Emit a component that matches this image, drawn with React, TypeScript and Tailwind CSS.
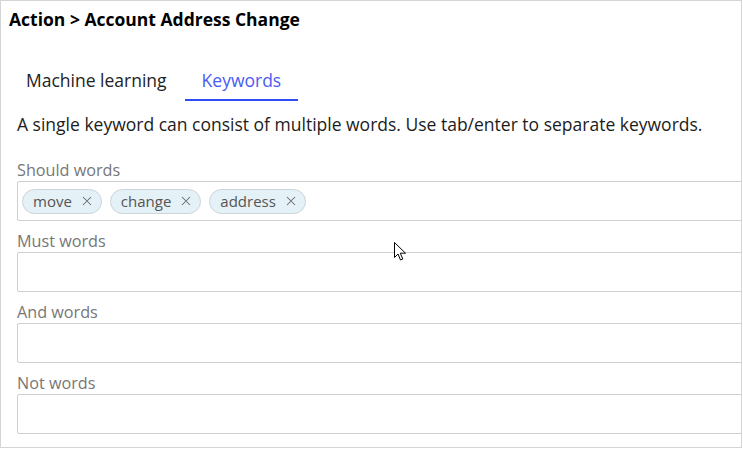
const fields = [
  { label: "Should words", chips: ["move", "change", "address"] },
  { label: "Must words", chips: [] },
  { label: "And words", chips: [] },
  { label: "Not words", chips: [] },
];

function Cursor() {
  return (
    <svg
      className="absolute left-[393px] top-[241px]"
      width="13"
      height="20"
      viewBox="0 0 13 20"
      aria-hidden="true"
    >
      <path
        d="M0.5 0.5 L0.5 15.5 L4 12 L6.5 18 L8.8 17 L6.3 11.2 L11.5 11.2 Z"
        fill="#fff"
        stroke="#000"
        strokeWidth="1"
      />
    </svg>
  );
}

function Cross() {
  return (
    <svg width="10" height="10" viewBox="0 0 10 10" aria-hidden="true">
      <path d="M1 1 L9 9 M9 1 L1 9" stroke="#6a6a6a" strokeWidth="1.05" />
    </svg>
  );
}

export default function App() {
  return (
    <div
      className="relative h-[448px] w-[742px] overflow-hidden border border-[#d4d4d4] bg-white text-[#222]"
      style={{ fontFamily: '"Open Sans", "Noto Sans", sans-serif' }}
    >
      <h1 className="pl-[8px] pt-[6px] text-[17.5px] font-bold leading-[24px] text-black">
        Action &gt; Account Address Change
      </h1>

      <div className="mt-[37px] flex pl-[7px] text-[17.5px] leading-[24px]">
        <div className="px-[18px] pb-[7px] text-[#222]">Machine learning</div>
        <div className="border-b-2 border-[#2f4df0] px-[17px] pb-[7px] text-[#4b5cf2]">Keywords</div>
      </div>

      <p className="mt-[11px] pl-[16px] text-[17.5px] leading-[24px] text-[#1c1c1c]">
        A single keyword can consist of multiple words. Use tab/enter to separate keywords.
      </p>

      <div className="mt-[23px] flex flex-col gap-[9px] pl-[16px]">
        {fields.map((f) => (
          <div key={f.label}>
            <div className="text-[16.2px] leading-[22px] text-[#777]">{f.label}</div>
            <div className="flex h-[40px] w-[760px] items-center gap-[8px] rounded-[2px] border border-[#cfcfcf] px-[4px]">
              {f.chips.map((c) => (
                <span
                  key={c}
                  className="flex h-[25px] items-center gap-[10px] rounded-full border border-[#cbd5da] bg-[#e4f1f7] pl-[10px] pr-[9px] text-[15px] text-[#555]"
                >
                  {c}
                  <Cross />
                </span>
              ))}
            </div>
          </div>
        ))}
      </div>

      <Cursor />
    </div>
  );
}
